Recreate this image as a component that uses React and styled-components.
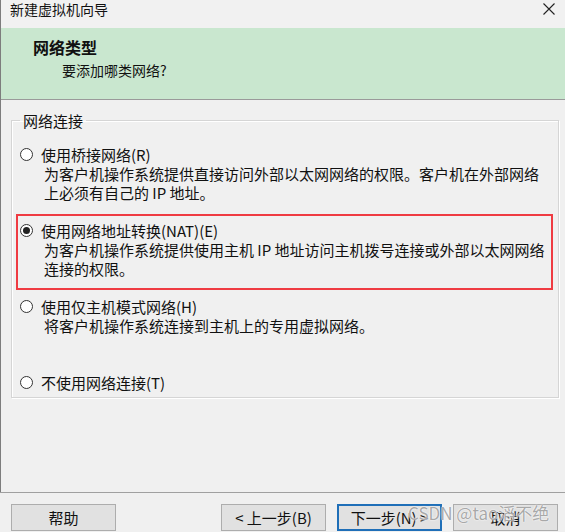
import styled, { createGlobalStyle } from 'styled-components'

const GlobalStyle = createGlobalStyle`
  html, body {
    margin: 0;
    padding: 0;
    background: #f0f0f0;
  }
  body {
    font-family: "Noto Sans CJK SC", "Noto Sans", sans-serif;
    color: #111;
  }
`

const Window = styled.div`
  position: relative;
  width: 565px;
  height: 532px;
  display: flex;
  flex-direction: column;
  background: #f0f0f0;
  overflow: hidden;
`

const Frame = styled.div`
  flex: 1;
  display: flex;
  flex-direction: column;
  border-left: 1px solid #7d7d7d;
`

const TitleBar = styled.div`
  height: 28px;
  display: flex;
  align-items: flex-start;
  justify-content: space-between;
  padding: 0 9px 0 9px;
  box-sizing: border-box;
  font-size: 14px;
  line-height: 19px;
  background: #f1f1f1;
`

const CloseButton = styled.div`
  width: 12px;
  height: 12px;
  margin-top: 3px;
  margin-right: 1px;
  display: flex;
`

const Header = styled.div`
  height: 72px;
  box-sizing: border-box;
  background: #c9e7cf;
  border-bottom: 1px solid #9a9a9a;
  padding: 9px 0 0 32px;
`

const HeaderTitle = styled.div`
  font-size: 16px;
  font-weight: bold;
  line-height: 20px;
`

const HeaderSub = styled.div`
  font-size: 14px;
  line-height: 20px;
  margin: 3px 0 0 29px;
`

const Body = styled.div`
  flex: 1;
  padding-top: 11px;
`

const Group = styled.fieldset`
  margin: 0 6px 0 10px;
  padding: 8px 5px 8px 4px;
  border: 1px solid #d5d5d5;
  box-shadow: inset 1px 1px 0 #fff, 1px 1px 0 #fff;
  height: 287px;
  box-sizing: border-box;
`

const Legend = styled.legend`
  font-size: 15px;
  line-height: 19px;
  padding: 0 3px;
  margin-left: 4px;
`

const Option = styled.div`
  height: 76px;
  box-sizing: border-box;
  border: 2px solid ${(p) => (p.$marked ? '#ef3b42' : 'transparent')};
  padding: 5px 0 0 2px;
  &:last-child {
    height: auto;
  }
`

const OptionRow = styled.label`
  display: flex;
  align-items: center;
  gap: 8px;
  font-size: 15px;
  line-height: 19px;
  white-space: nowrap;
`

const Radio = styled.span`
  width: 13px;
  height: 13px;
  box-sizing: border-box;
  border-radius: 50%;
  border: 1px solid #333;
  background: #fff;
  display: flex;
  align-items: center;
  justify-content: center;
  flex: none;
  &::after {
    content: '';
    width: 7px;
    height: 7px;
    border-radius: 50%;
    background: ${(p) => (p.$checked ? '#222' : 'transparent')};
  }
`

const Desc = styled.div`
  margin-left: 24px;
  font-size: 15px;
  line-height: 19px;
  white-space: nowrap;
`

const Footer = styled.div`
  height: 40px;
  box-sizing: border-box;
  border-top: 1px solid #a0a0a0;
  padding: 11px 7px 0 11px;
  display: flex;
  gap: 11px;
`

const Spacer = styled.div`
  flex: 1;
`

const Button = styled.button`
  width: 105px;
  height: 27px;
  box-sizing: border-box;
  background: #e1e1e1;
  border: ${(p) => (p.$default ? '2px solid #1f6fb8' : '1px solid #adadad')};
  font-family: inherit;
  font-size: 15px;
  line-height: 19px;
  color: #111;
  padding: 0;
`

const Watermark = styled.div`
  position: absolute;
  left: 408px;
  top: 502px;
  font-family: "Noto Sans CJK SC", "Noto Sans", sans-serif;
  font-size: 17px;
  line-height: 22px;
  color: rgba(140, 140, 140, 0.75);
  text-shadow: 0 0 1px #fff, 0 0 2px #fff;
  pointer-events: none;
  white-space: nowrap;
`

const options = [
  {
    label: '使用桥接网络(R)',
    lines: ['为客户机操作系统提供直接访问外部以太网网络的权限。客户机在外部网络', '上必须有自己的 IP 地址。'],
  },
  {
    label: '使用网络地址转换(NAT)(E)',
    lines: ['为客户机操作系统提供使用主机 IP 地址访问主机拨号连接或外部以太网网络', '连接的权限。'],
    checked: true,
    marked: true,
  },
  {
    label: '使用仅主机模式网络(H)',
    lines: ['将客户机操作系统连接到主机上的专用虚拟网络。'],
  },
  {
    label: '不使用网络连接(T)',
    lines: [],
  },
]

const App = () => {
  return (
    <Window>
      <GlobalStyle />
      <Frame>
        <TitleBar>
          <span>新建虚拟机向导</span>
          <CloseButton>
            <svg width="12" height="12" viewBox="0 0 12 12">
              <path d="M0.5 0.5 L11.5 11.5 M11.5 0.5 L0.5 11.5" stroke="#222" strokeWidth="1.1" fill="none" />
            </svg>
          </CloseButton>
        </TitleBar>
        <Header>
          <HeaderTitle>网络类型</HeaderTitle>
          <HeaderSub>要添加哪类网络?</HeaderSub>
        </Header>
        <Body>
          <Group>
            <Legend>网络连接</Legend>
            {options.map((o) => (
              <Option key={o.label} $marked={o.marked}>
                <OptionRow>
                  <Radio $checked={o.checked} />
                  {o.label}
                </OptionRow>
                {o.lines.map((line) => (
                  <Desc key={line}>{line}</Desc>
                ))}
              </Option>
            ))}
          </Group>
        </Body>
      </Frame>
      <Footer>
        <Button>帮助</Button>
        <Spacer />
        <Button>&lt; 上一步(B)</Button>
        <Button $default>下一步(N) &gt;</Button>
        <Button>取消</Button>
      </Footer>
      <Watermark>CSDN @tao滔不绝</Watermark>
    </Window>
  )
}

export default App
